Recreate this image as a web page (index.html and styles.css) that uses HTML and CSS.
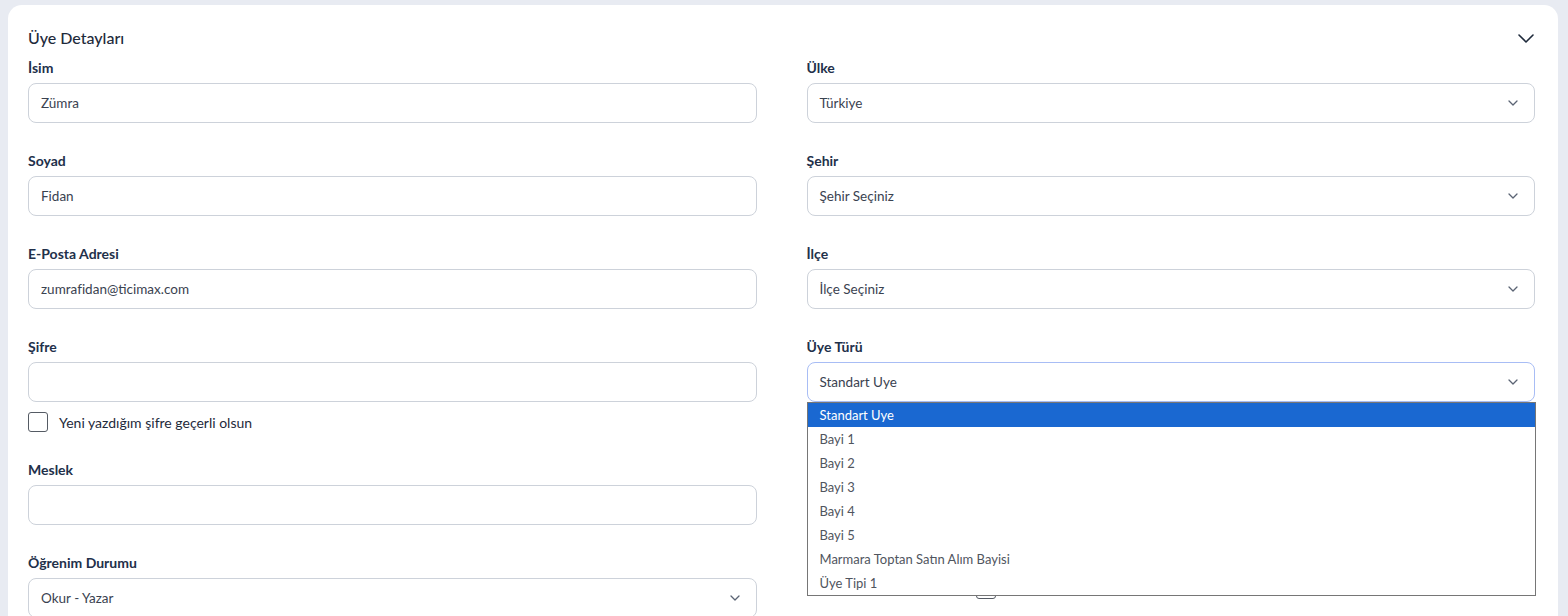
FILE: index.html
```html
<!DOCTYPE html>
<html lang="tr">
<head>
    <meta charset="UTF-8">
    <meta name="viewport" content="width=device-width, initial-scale=1.0">
    <title>Üye Detayları</title>
    <link rel="stylesheet" href="styles.css">
</head>
<body>
    <div class="card">
        <div class="card-head">
            <h3>Üye Detayları</h3>
            <svg class="collapse" width="16" height="9" viewBox="0 0 16 9"><path d="M1 1l7 7 7-7" fill="none" stroke="#1e2a3b" stroke-width="1.6" stroke-linecap="round" stroke-linejoin="round"/></svg>
        </div>
        <div class="form-cols">
            <div class="col">
                <div class="field">
                    <label>İsim</label>
                    <div class="input">Zümra</div>
                </div>
                <div class="field">
                    <label>Soyad</label>
                    <div class="input">Fidan</div>
                </div>
                <div class="field">
                    <label>E-Posta Adresi</label>
                    <div class="input">zumrafidan@ticimax.com</div>
                </div>
                <div class="field with-check">
                    <label>Şifre</label>
                    <div class="input"></div>
                    <div class="check-row">
                        <span class="box"></span>
                        <span>Yeni yazdığım şifre geçerli olsun</span>
                    </div>
                </div>
                <div class="field">
                    <label>Meslek</label>
                    <div class="input"></div>
                </div>
                <div class="field">
                    <label>Öğrenim Durumu</label>
                    <div class="input select">Okur - Yazar
                        <svg class="caret" width="10" height="6" viewBox="0 0 10 6"><path d="M1 1l4 4 4-4" fill="none" stroke="#5b6474" stroke-width="1.3" stroke-linecap="round" stroke-linejoin="round"/></svg>
                    </div>
                </div>
            </div>
            <div class="col">
                <div class="field">
                    <label>Ülke</label>
                    <div class="input select">Türkiye
                        <svg class="caret" width="10" height="6" viewBox="0 0 10 6"><path d="M1 1l4 4 4-4" fill="none" stroke="#5b6474" stroke-width="1.3" stroke-linecap="round" stroke-linejoin="round"/></svg>
                    </div>
                </div>
                <div class="field">
                    <label>Şehir</label>
                    <div class="input select">Şehir Seçiniz
                        <svg class="caret" width="10" height="6" viewBox="0 0 10 6"><path d="M1 1l4 4 4-4" fill="none" stroke="#5b6474" stroke-width="1.3" stroke-linecap="round" stroke-linejoin="round"/></svg>
                    </div>
                </div>
                <div class="field">
                    <label>İlçe</label>
                    <div class="input select">İlçe Seçiniz
                        <svg class="caret" width="10" height="6" viewBox="0 0 10 6"><path d="M1 1l4 4 4-4" fill="none" stroke="#5b6474" stroke-width="1.3" stroke-linecap="round" stroke-linejoin="round"/></svg>
                    </div>
                </div>
                <div class="field open">
                    <label>Üye Türü</label>
                    <div class="input select focus">Standart Uye
                        <svg class="caret" width="10" height="6" viewBox="0 0 10 6"><path d="M1 1l4 4 4-4" fill="none" stroke="#5b6474" stroke-width="1.3" stroke-linecap="round" stroke-linejoin="round"/></svg>
                    </div>
                    <ul class="options">
                        <li class="active">Standart Uye</li>
                        <li>Bayi 1</li>
                        <li>Bayi 2</li>
                        <li>Bayi 3</li>
                        <li>Bayi 4</li>
                        <li>Bayi 5</li>
                        <li>Marmara Toptan Satın Alım Bayisi</li>
                        <li>Üye Tipi 1</li>
                    </ul>
                </div>
                <div class="field hidden-check">
                    <span class="box"></span>
                </div>
            </div>
        </div>
    </div>
</body>
</html>
```

FILE: styles.css
```css
* {
    box-sizing: border-box;
    margin: 0;
    padding: 0;
}
body {
    font-family: Lato, "Noto Sans", Arial, sans-serif;
    background-color: #e8ebf2;
    padding: 5px 10px 0 8px;
    color: #1e2a3b;
    overflow: hidden;
    height: 616px;
}
.card {
    background-color: #ffffff;
    border-radius: 14px;
    padding: 22px 23px 40px 20px;
    min-height: 700px;
}
.card-head {
    display: flex;
    justify-content: space-between;
    align-items: center;
    height: 22px;
    margin-bottom: 9px;
}
.card-head h3 {
    font-size: 16px;
    font-weight: 500;
    line-height: 22px;
}
.collapse {
    margin-right: 1px;
}
.form-cols {
    display: grid;
    grid-template-columns: 1fr 1fr;
    column-gap: 50px;
}
.field {
    position: relative;
    margin-bottom: 28px;
}
label {
    display: block;
    font-size: 14px;
    font-weight: 700;
    line-height: 20px;
    margin-bottom: 5px;
    color: #22304a;
}
.input {
    height: 40px;
    border: 1px solid #cdd2da;
    border-radius: 8px;
    padding: 0 12px;
    display: flex;
    align-items: center;
    font-size: 13.5px;
    color: #3a4250;
}
.select {
    justify-content: space-between;
}
.caret {
    margin-right: 4px;
}
.focus {
    border-color: #a8bdf5;
}
.with-check {
    margin-bottom: 28px;
}
.check-row {
    display: flex;
    align-items: center;
    gap: 11px;
    margin-top: 10px;
    font-size: 14px;
    color: #1e2a3b;
    height: 20px;
}
.box {
    display: block;
    width: 20px;
    height: 20px;
    border: 1.5px solid #555b64;
    border-radius: 3px;
    flex: none;
}
.hidden-check {
    padding: 149px 0 0 169px;
}
.options {
    position: absolute;
    top: 100%;
    left: 0;
    right: -1px;
    list-style: none;
    background-color: #ffffff;
    border: 1px solid #767676;
    z-index: 5;
}
.options li {
    height: 24px;
    line-height: 24px;
    padding-left: 12px;
    font-size: 13px;
    font-weight: 400;
    color: #50555e;
}
.options li.active {
    background-color: #1a68d1;
    color: #ffffff;
}
```
